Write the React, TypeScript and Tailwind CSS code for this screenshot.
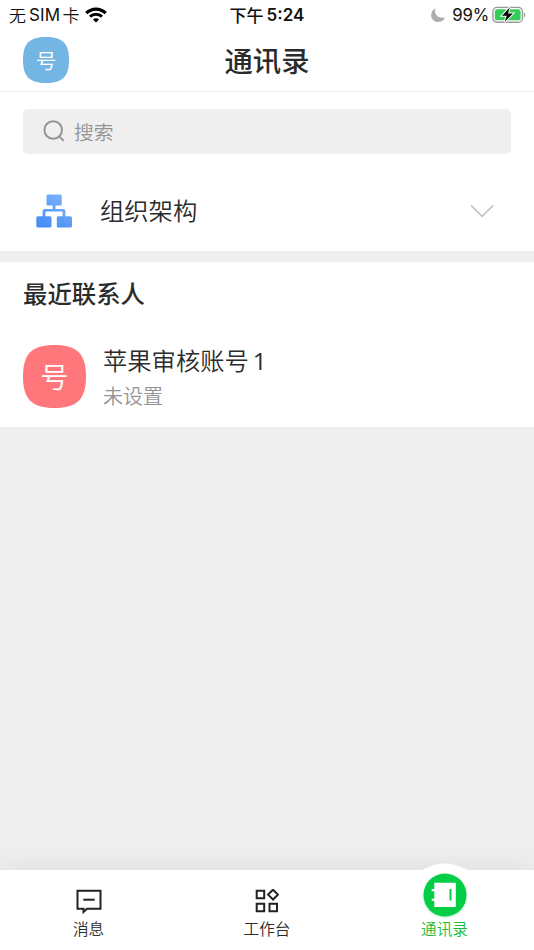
import React from "react";

function Squircle({ size, color, textClass }: { size: number; color: string; textClass: string }) {
  return (
    <svg width={size} height={size} viewBox="0 0 100 100" className="shrink-0">
      <path d="M50 0C86 0 100 14 100 50S86 100 50 100S0 86 0 50S14 0 50 0Z" fill={color} />
      <text x="50" y="68.5" textAnchor="middle" fill="#fff" className={textClass}>号</text>
    </svg>
  );
}

function StatusBar() {
  return (
    <div className="grid h-[30px] grid-cols-3 text-[17px] leading-[30px] text-[#111]">
      <div className="flex items-center pl-[9px]">
        <span className="text-[17px] font-[350]">无</span>
        <span className="ml-[3px] text-[17px] tracking-[0.2px] font-[Inter]">SIM</span>
        <span className="ml-[2px] font-[350]">卡</span>
        <svg className="ml-[6px]" width="22" height="16" viewBox="0 0 22 16" fill="none" stroke="#000">
          <path d="M1.3 6.1C6.8.7 15.2.7 20.7 6.1" strokeWidth="3.2" />
          <path d="M5 9.7C8.5 6.4 13.5 6.4 17 9.7" strokeWidth="3" />
          <path d="M11 15.5L7.9 12.5Q11 9.8 14.1 12.5Z" fill="#000" stroke="none" />
        </svg>
      </div>
      <div className="flex items-center justify-center font-medium">
        <span>下午</span>
        <span className="ml-[3px] font-[Inter] text-[17px] font-semibold">5:24</span>
      </div>
      <div className="flex items-center justify-end pr-[7px]">
        <svg width="15" height="14" viewBox="0 0 15 14">
          <path d="M4.4.3C2.7 6.8 7.2 11 14.2 9.5C12.6 12.5 9.9 14 7 14C3.2 14 .2 11 .2 7.2C.2 4.1 1.8 1.6 4.4.3Z" fill="#adadad" />
        </svg>
        <span className="ml-[6px] font-[Inter] text-[16.8px] tracking-[-0.2px]">99%</span>
        <svg className="ml-[3px]" width="35" height="18" viewBox="0 0 35 18">
          <rect x=".9" y="1.4" width="29.6" height="14.8" rx="4.3" fill="#fff" stroke="#999" strokeWidth="1.4" />
          <rect x="2.8" y="3.3" width="25.8" height="11" rx="2.6" fill="#35cb59" />
          <path d="M32.1 6Q34.6 8.8 32.1 11.6Z" fill="#999" />
          <path d="M17.7 1.5L10 9.7H14.7L12.7 16L20.9 7.6H16Z" fill="#000" stroke="#fff" strokeWidth="2" paintOrder="stroke" />
        </svg>
      </div>
    </div>
  );
}

function OrgIcon() {
  return (
    <svg width="36" height="34" viewBox="0 0 36 34" className="ml-[13px] mt-px">
      <defs>
        <linearGradient id="org" x1=".8" y1="0" x2=".2" y2="1">
          <stop stopColor="#7eb4fd" />
          <stop offset="1" stopColor="#458cf3" />
        </linearGradient>
      </defs>
      <path
        fill="url(#org)"
        d="M12 .5H24.3Q25.8.5 25.8 2V10Q25.8 11.5 24.3 11.5H19.5V15H27.2Q29.4 15 29.4 17.2V22.2H34.5Q36 22.2 36 23.7V32Q36 33.5 34.5 33.5H22.3Q20.8 33.5 20.8 32V23.7Q20.8 22.2 22.3 22.2H26.6V17.6H9.4V22.2H14Q15.5 22.2 15.5 23.7V32Q15.5 33.5 14 33.5H1.8Q.3 33.5 .3 32V23.7Q.3 22.2 1.8 22.2H6.6V17.2Q6.6 15 8.8 15H16.7V11.5H12Q10.5 11.5 10.5 10V2Q10.5.5 12 .5Z"
      />
    </svg>
  );
}

export default function App() {
  return (
    <div className="flex h-[950px] w-[534px] flex-col overflow-hidden bg-[#efefef] font-['Noto_Sans_CJK_SC',sans-serif] text-[#2b2b2b]">
      <div className="bg-white">
        <StatusBar />
        <header className="grid h-[62px] grid-cols-3 items-center border-b border-[#efefef] px-[23px] pb-[2px]">
          <Squircle size={46} color="#74b6e3" textClass="text-[45px] font-[350]" />
          <h1 className="text-center text-[28.3px] leading-[40px] font-medium">通讯录</h1>
        </header>
        <div className="px-[23px] pt-[17px]">
          <div className="flex h-[45px] items-center rounded-[5px] bg-[#efefef] pl-[20px] text-[19.8px] text-[#949494]">
            <svg width="22" height="22" viewBox="0 0 22 22" fill="none" stroke="#929292" strokeWidth="1.9" className="-mt-[2px]">
              <circle cx="10.2" cy="10" r="8.8" />
              <path d="M16.2 16.3L20.7 20.8" />
            </svg>
            <span className="ml-[9px] leading-[28px] font-[350]">搜索</span>
          </div>
        </div>
        <div className="flex h-[97px] items-center px-[23px] pb-[2px] pt-[18px]">
          <OrgIcon />
          <span className="-mt-px ml-[28px] text-[24.3px] leading-[36px] font-[350]">组织架构</span>
          <svg className="ml-auto mr-[16px]" width="26" height="14" viewBox="0 0 26 14" fill="none" stroke="#c4c4c4" strokeWidth="1.7">
            <path d="M2 1.3L13.2 12.3L24.2 1.3" />
          </svg>
        </div>
      </div>

      <section className="mt-[11px] h-[165px] bg-white px-[23px]">
        <h2 className="pt-[13px] text-[24.4px] leading-[36px] font-medium">最近联系人</h2>
        <div className="mt-[31px] flex items-center">
          <Squircle size={63} color="#ff777a" textClass="text-[45px] font-[350]" />
          <div className="ml-[17px] flex flex-col">
            <span className="text-[24.3px] leading-[36px] font-[350]">苹果审核账号<span className="ml-[4px] font-['Open_Sans'] font-normal">1</span></span>
            <span className="mt-[3px] text-[20px] leading-[28px] font-[350] text-[#949494]">未设置</span>
          </div>
        </div>
      </section>

      <nav className="mt-auto grid h-[80px] grid-cols-3 bg-white text-[15.6px] leading-[22px] shadow-[0_0_34px_rgba(0,0,0,0.085)]">
        <div className="flex flex-col items-center pt-[19px] pr-px">
          <svg width="26" height="25" viewBox="0 0 26 25" fill="none" stroke="#222" strokeWidth="2">
            <path d="M1.5 1.8H24.5V19.8H11L7.5 23V19.8H1.5Z" />
            <path d="M7.3 10.7H18.7" />
          </svg>
          <span className="mt-[3px] font-[350]">消息</span>
        </div>
        <div className="flex flex-col items-center pt-[19px]">
          <svg width="24" height="25" viewBox="0 0 24 25" fill="none" stroke="#222" strokeWidth="2">
            <path d="M1.7 1.7H9.2V9.2H1.7ZM1.7 14.8H9.2V22.3H1.7ZM14.5 14.8H22V22.3H14.5ZM18 0.7L22.9 5.6L18 10.5L13.1 5.6Z" />
          </svg>
          <span className="mt-[3px] font-[350]">工作台</span>
        </div>
        <div className="-mt-[5px] flex flex-col items-center pr-px text-[#1bbd36]">
          <svg width="60" height="52" viewBox="0 0 60 52" className="overflow-visible">
            <path d="M4 5.5Q8 5 12 2.8A42 42 0 0 1 48 2.8Q52 5 56 5.5V52H4Z" fill="#fff" />
            <circle cx="30" cy="30" r="21.5" fill="#04ce45" className="drop-shadow-[0_1px_1px_rgba(4,206,69,0.35)]" />
            <path d="M19.3 17.7H40.8V42H19.3V35.8H16.7V33.7H19.3V26.2H16.7V24.1H19.3Z" fill="#fff" />
            <path d="M35.5 24V35.5" stroke="#04ce45" strokeWidth="2" />
          </svg>
          <span className="font-[350]">通讯录</span>
        </div>
      </nav>
    </div>
  );
}
